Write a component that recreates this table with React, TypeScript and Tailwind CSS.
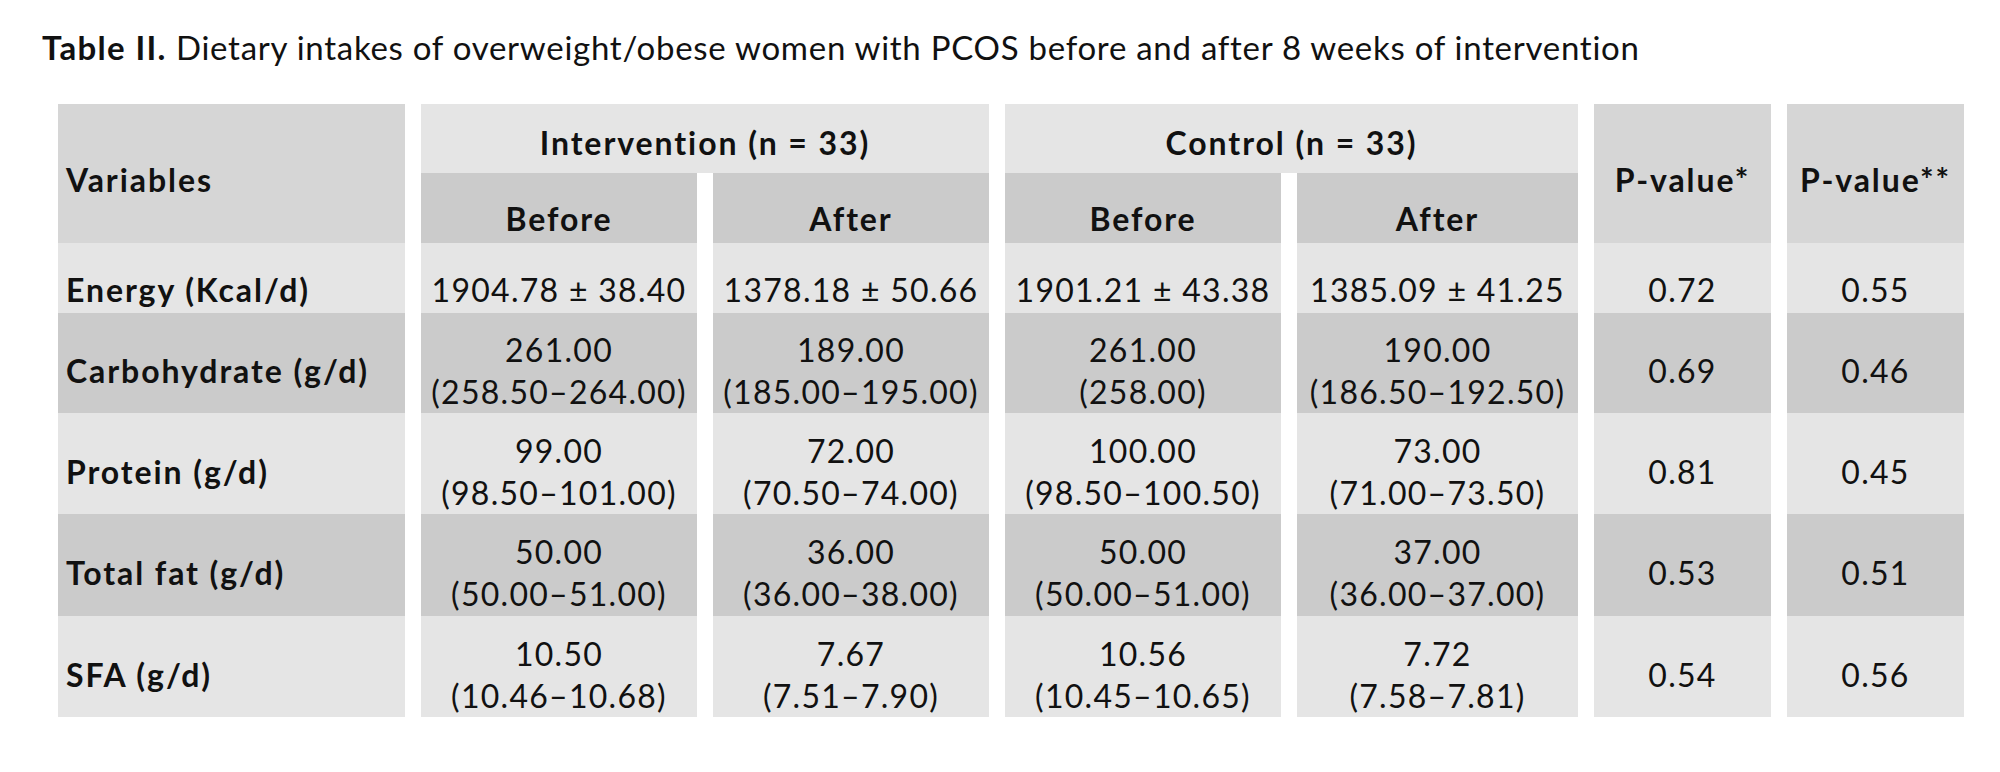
const rows = [
  {
    label: 'Energy (Kcal/d)',
    cells: [['1904.78 ± 38.40'], ['1378.18 ± 50.66'], ['1901.21 ± 43.38'], ['1385.09 ± 41.25']],
    p1: '0.72',
    p2: '0.55',
  },
  {
    label: 'Carbohydrate (g/d)',
    cells: [
      ['261.00', '(258.50–264.00)'],
      ['189.00', '(185.00–195.00)'],
      ['261.00', '(258.00)'],
      ['190.00', '(186.50–192.50)'],
    ],
    p1: '0.69',
    p2: '0.46',
  },
  {
    label: 'Protein (g/d)',
    cells: [
      ['99.00', '(98.50–101.00)'],
      ['72.00', '(70.50–74.00)'],
      ['100.00', '(98.50–100.50)'],
      ['73.00', '(71.00–73.50)'],
    ],
    p1: '0.81',
    p2: '0.45',
  },
  {
    label: 'Total fat (g/d)',
    cells: [
      ['50.00', '(50.00–51.00)'],
      ['36.00', '(36.00–38.00)'],
      ['50.00', '(50.00–51.00)'],
      ['37.00', '(36.00–37.00)'],
    ],
    p1: '0.53',
    p2: '0.51',
  },
  {
    label: 'SFA (g/d)',
    cells: [
      ['10.50', '(10.46–10.68)'],
      ['7.67', '(7.51–7.90)'],
      ['10.56', '(10.45–10.65)'],
      ['7.72', '(7.58–7.81)'],
    ],
    p1: '0.54',
    p2: '0.56',
  },
];

export default function App() {
  return (
    <div
      className="w-[2000px] h-[772px] bg-white text-[#111] px-[42px] pt-[27px]"
      style={{ fontFamily: 'Lato, "Open Sans", sans-serif' }}
    >
      <h1 className="text-[33px] leading-[40px] font-normal tracking-[0.022em]">
        <span className="font-bold tracking-[0.04em]">Table II.</span> Dietary intakes of overweight/obese women with PCOS before and after 8 weeks of intervention
      </h1>

      <div className="ml-[16px] mt-[37px] grid grid-cols-[347px_276px_276px_276px_281px_177px_177px] grid-rows-[69px_70px_70px_100px_101px_102px_101px] gap-x-[16px] text-[32px] leading-[42px] tracking-[0.04em]">
        {/* header */}
        <div className="row-span-2 bg-[#d6d6d6] flex items-center pl-[8px] pt-[13px] font-bold tracking-[0.06em]">Variables</div>
        <div className="col-span-2 bg-[#e5e5e5] flex items-center justify-center pt-[9px] font-bold tracking-[0.06em]">Intervention (n = 33)</div>
        <div className="col-span-2 bg-[#e5e5e5] flex items-center justify-center pt-[9px] font-bold tracking-[0.06em]">Control (n = 33)</div>
        <div className="row-span-2 bg-[#d6d6d6] flex items-center justify-center pt-[13px] font-bold tracking-[0.06em]">P-value*</div>
        <div className="row-span-2 bg-[#d6d6d6] flex items-center justify-center pt-[13px] font-bold tracking-[0.06em]">P-value**</div>
        <div className="bg-[#cbcbcb] flex items-center justify-center pt-[22px] font-bold tracking-[0.06em]">Before</div>
        <div className="bg-[#cbcbcb] flex items-center justify-center pt-[22px] font-bold tracking-[0.06em]">After</div>
        <div className="bg-[#cbcbcb] flex items-center justify-center pt-[22px] font-bold tracking-[0.06em]">Before</div>
        <div className="bg-[#cbcbcb] flex items-center justify-center pt-[22px] font-bold tracking-[0.06em]">After</div>

        {/* body */}
        {rows.map((r, i) => {
          const bg = i % 2 === 0 ? 'bg-[#e5e5e5]' : 'bg-[#cbcbcb]';
          const pad = i === 0 ? 'pt-[24px]' : 'pt-[16px]';
          return [
            <div key={r.label} className={`${bg} ${pad} flex items-center pl-[8px] font-bold tracking-[0.06em]`}>{r.label}</div>,
            ...r.cells.map((c, j) => (
              <div key={r.label + j} className={`${bg} ${pad} flex flex-col items-center justify-center text-center`}>
                {c.map((line) => (
                  <span key={line}>{line}</span>
                ))}
              </div>
            )),
            <div key={r.label + 'p1'} className={`${bg} ${pad} flex items-center justify-center`}>{r.p1}</div>,
            <div key={r.label + 'p2'} className={`${bg} ${pad} flex items-center justify-center`}>{r.p2}</div>,
          ];
        })}
      </div>
    </div>
  );
}
